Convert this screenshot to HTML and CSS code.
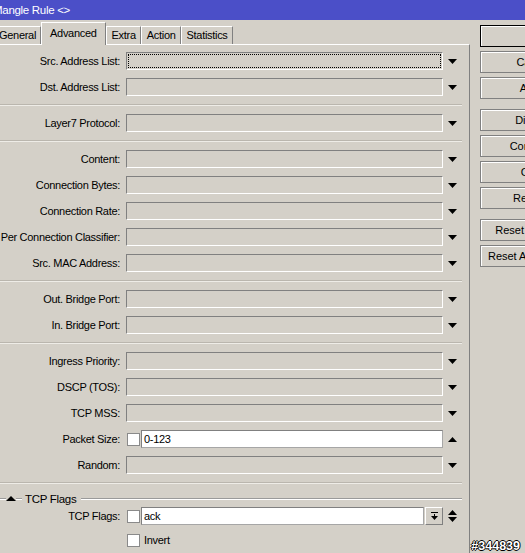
FILE: index.html
```html
<!DOCTYPE html>
<html>
<head>
<meta charset="utf-8">
<link rel="stylesheet" href="styles.css">
</head>
<body>
<div class="title">Mangle Rule &lt;&gt;</div>
<div class="main">
  <div class="left">
    <div class="tabs">
      <div class="tab first">General</div>
      <div class="tab active">Advanced</div>
      <div class="tab">Extra</div>
      <div class="tab">Action</div>
      <div class="tab">Statistics</div>
    </div>
    <div class="panel">
      <div class="row"><div class="label">Src. Address List:</div><div class="field focus"></div><svg class="arrow" width="9" height="5" viewBox="0 0 9 5"><polygon points="0,0 9,0 4.5,5"/></svg></div>
      <div class="row"><div class="label">Dst. Address List:</div><div class="field"></div><svg class="arrow" width="9" height="5" viewBox="0 0 9 5"><polygon points="0,0 9,0 4.5,5"/></svg></div>
      <div class="sep"></div>
      <div class="row"><div class="label">Layer7 Protocol:</div><div class="field"></div><svg class="arrow" width="9" height="5" viewBox="0 0 9 5"><polygon points="0,0 9,0 4.5,5"/></svg></div>
      <div class="sep"></div>
      <div class="row"><div class="label">Content:</div><div class="field"></div><svg class="arrow" width="9" height="5" viewBox="0 0 9 5"><polygon points="0,0 9,0 4.5,5"/></svg></div>
      <div class="row"><div class="label">Connection Bytes:</div><div class="field"></div><svg class="arrow" width="9" height="5" viewBox="0 0 9 5"><polygon points="0,0 9,0 4.5,5"/></svg></div>
      <div class="row"><div class="label">Connection Rate:</div><div class="field"></div><svg class="arrow" width="9" height="5" viewBox="0 0 9 5"><polygon points="0,0 9,0 4.5,5"/></svg></div>
      <div class="row"><div class="label">Per Connection Classifier:</div><div class="field"></div><svg class="arrow" width="9" height="5" viewBox="0 0 9 5"><polygon points="0,0 9,0 4.5,5"/></svg></div>
      <div class="row"><div class="label">Src. MAC Address:</div><div class="field"></div><svg class="arrow" width="9" height="5" viewBox="0 0 9 5"><polygon points="0,0 9,0 4.5,5"/></svg></div>
      <div class="sep"></div>
      <div class="row"><div class="label">Out. Bridge Port:</div><div class="field"></div><svg class="arrow" width="9" height="5" viewBox="0 0 9 5"><polygon points="0,0 9,0 4.5,5"/></svg></div>
      <div class="row"><div class="label">In. Bridge Port:</div><div class="field"></div><svg class="arrow" width="9" height="5" viewBox="0 0 9 5"><polygon points="0,0 9,0 4.5,5"/></svg></div>
      <div class="sep"></div>
      <div class="row"><div class="label">Ingress Priority:</div><div class="field"></div><svg class="arrow" width="9" height="5" viewBox="0 0 9 5"><polygon points="0,0 9,0 4.5,5"/></svg></div>
      <div class="row"><div class="label">DSCP (TOS):</div><div class="field"></div><svg class="arrow" width="9" height="5" viewBox="0 0 9 5"><polygon points="0,0 9,0 4.5,5"/></svg></div>
      <div class="row"><div class="label">TCP MSS:</div><div class="field"></div><svg class="arrow" width="9" height="5" viewBox="0 0 9 5"><polygon points="0,0 9,0 4.5,5"/></svg></div>
      <div class="row"><div class="label">Packet Size:</div><div class="check"></div><div class="field white short">0-123</div><svg class="arrow" width="9" height="5" viewBox="0 0 9 5"><polygon points="0,5 9,5 4.5,0"/></svg></div>
      <div class="row"><div class="label">Random:</div><div class="field"></div><svg class="arrow" width="9" height="5" viewBox="0 0 9 5"><polygon points="0,0 9,0 4.5,5"/></svg></div>
      <div class="sep"></div>
      <div class="group">
        <div class="gline lead"></div>
        <svg class="gtri" width="10" height="5" viewBox="0 0 10 5"><polygon points="0,5 10,5 5,0"/></svg>
        <div class="gline lead"></div>
        <div class="gtext">TCP Flags</div>
        <div class="gline fill"></div>
      </div>
      <div class="row"><div class="label">TCP Flags:</div><div class="check"></div><div class="field white shorter">ack</div><div class="minibtn"><svg width="9" height="9" viewBox="0 0 9 9"><rect x="1" y="0" width="7" height="1"/><rect x="4" y="2" width="1" height="2"/><polygon points="1,4 8,4 4.5,8"/></svg></div><svg class="arrow updown" width="9" height="12" viewBox="0 0 9 12"><polygon points="0,5 9,5 4.5,0"/><polygon points="0,7 9,7 4.5,12"/></svg></div>
      <div class="row tight"><div class="label"></div><div class="check"></div><div class="cbtext">Invert</div></div>
    </div>
  </div>
  <div class="buttons">
    <div class="btn default">OK</div>
    <div class="btn">Cancel</div>
    <div class="btn gap">Apply</div>
    <div class="btn">Disable</div>
    <div class="btn">Comment</div>
    <div class="btn">Copy</div>
    <div class="btn gap">Remove</div>
    <div class="btn">Reset Counters</div>
    <div class="btn">Reset All Counters</div>
  </div>
</div>
<div class="watermark">#344839</div>
</body>
</html>
```
FILE: styles.css
```css
* { box-sizing: border-box; }
html, body {
  margin: 0;
  padding: 0;
  height: 553px;
  overflow: hidden;
}
body {
  background: #d4d0c8;
  font-family: "Liberation Sans", Arial, sans-serif;
  font-size: 11px;
  letter-spacing: -0.3px;
  color: #000;
  position: relative;
}
.title {
  height: 20px;
  background: #4b4fc8;
  color: #fff;
  font-size: 11.5px;
  line-height: 21px;
  text-indent: -7px;
  white-space: nowrap;
  overflow: hidden;
}
.main {
  display: flex;
  height: 533px;
}
.left {
  width: 470px;
  display: flex;
  flex-direction: column;
  flex: none;
}
.tabs {
  flex: none;
  display: flex;
  align-items: flex-end;
  height: 24px;
  margin-left: -6px;
}
.tab {
  height: 18px;
  line-height: 17px;
  padding: 0 4px 0 5px;
  border-top: 1px solid #fff;
  border-left: 1px solid #fff;
  border-right: 1px solid #808080;
  white-space: nowrap;
}
.tab.first { padding: 0 4px 0 4px; }
.tab.active {
  height: 23px;
  line-height: 20px;
  padding: 0 8px 1px 8px;
  margin-bottom: -1px;
  background: #d4d0c8;
  position: relative;
  z-index: 1;
}
.panel {
  flex: 1;
  min-height: 0;
  overflow: hidden;
  border-top: 1px solid #fff;
  border-right: 1px solid #808080;
  padding-top: 7px;
}
.row {
  display: flex;
  align-items: center;
  height: 18px;
  margin-bottom: 8px;
}
.row.tight { margin-top: -2px; }
.label {
  width: 120px;
  flex: none;
  text-align: right;
  white-space: nowrap;
}
.field {
  margin-left: 6px;
  width: 317px;
  height: 18px;
  flex: none;
  border: 1px solid;
  border-color: #808080 #fff #fff #808080;
  padding-left: 2px;
  line-height: 16px;
}
.field.focus {
  outline: 1px dotted #000;
  outline-offset: -3px;
}
.field.white {
  background: #fff;
  border-color: #808080 #a6a6a6 #a6a6a6 #808080;
  margin-left: 1px;
}
.field.short { width: 302px; }
.field.shorter { width: 283px; }
.check {
  width: 13px;
  height: 13px;
  flex: none;
  margin-left: 7px;
  background: #fff;
  border: 1px solid #8a8a8a;
}
.cbtext { margin-left: 4px; }
.arrow {
  flex: none;
  margin-left: 5px;
  display: block;
}
.minibtn {
  width: 18px;
  height: 18px;
  flex: none;
  margin-left: 1px;
  border: 1px solid;
  border-color: #fff #808080 #808080 #fff;
  display: flex;
  align-items: center;
  justify-content: center;
}
.minibtn svg { display: block; }
.sep {
  margin: 0 7px 8px 0;
  height: 2px;
  border-top: 1px solid #bab6ae;
  border-bottom: 1px solid #eeece7;
}
.group {
  display: flex;
  align-items: center;
  height: 13px;
  margin: 0 7px 2px 0;
}
.gline {
  height: 2px;
  border-top: 1px solid #9a9a9a;
  border-bottom: 1px solid #fff;
}
.gline.lead { width: 6px; flex: none; }
.gline.fill { flex: 1; }
.gtri { display: block; flex: none; }
.gtext {
  margin: 0 5px 0 3px;
  font-size: 11.5px;
  white-space: nowrap;
}
.buttons {
  margin-left: 10px;
  padding-top: 5px;
  flex: none;
}
.btn {
  width: 107px;
  height: 22px;
  border: 1px solid #808080;
  box-shadow: inset 1px 1px #fff;
  display: flex;
  align-items: center;
  justify-content: center;
  margin-bottom: 4px;
  white-space: nowrap;
  letter-spacing: 0;
}
.btn.default { border-color: #000; }
.btn.gap { margin-bottom: 10px; }
.watermark {
  position: absolute;
  top: 539px;
  right: 5px;
  font-size: 12.5px;
  font-weight: bold;
  line-height: 14px;
  color: #fff;
  letter-spacing: 0;
  text-shadow: 1px 0 #000, -1px 0 #000, 0 1px #000, 0 -1px #000;
}
```
